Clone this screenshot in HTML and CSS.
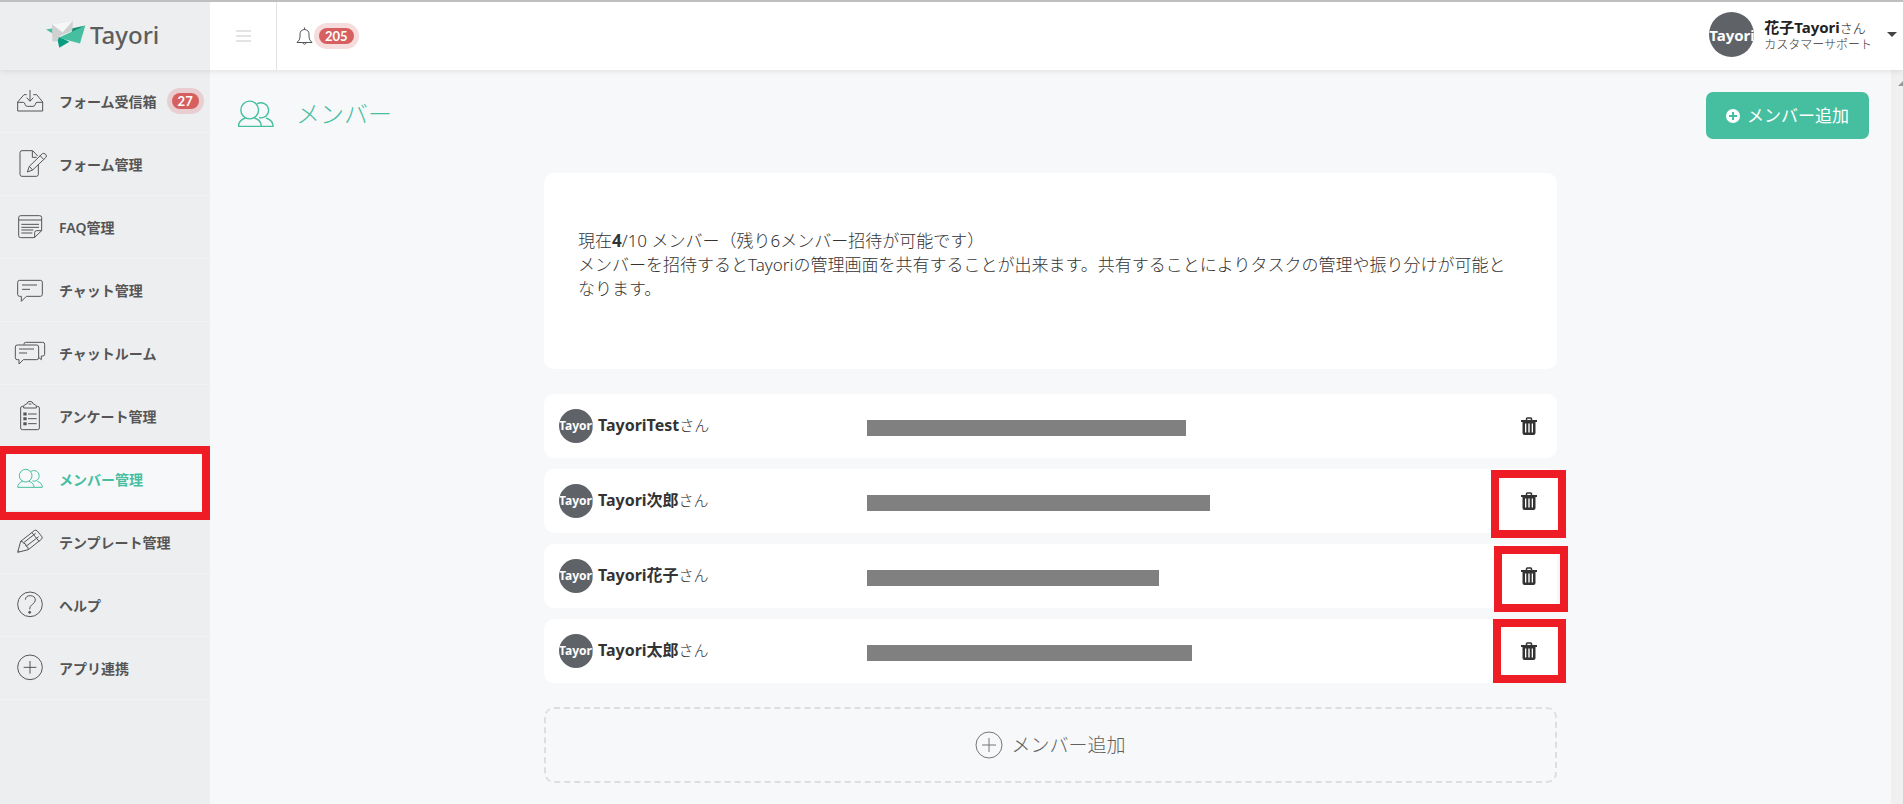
FILE: index.html
```html
<!DOCTYPE html>
<html lang="ja">
<head>
<meta charset="utf-8">
<title>メンバー | Tayori</title>
<link rel="stylesheet" href="styles.css">
</head>
<body>
<svg class="defs" aria-hidden="true">
  <symbol id="i-members" viewBox="45 402 90 90">
    <circle cx="77" cy="437" r="19"/>
    <path d="M68 454Q53 459 53 472H102Q102 459 87 454M93 424A16 16 0 1 1 97 453M112 454Q127 459 127 472H102"/>
  </symbol>
  <symbol id="i-trash" viewBox="0 0 16 18">
    <path d="M5.500 3V1.800Q5.500 1 6.300 1H9.700Q10.500 1 10.500 1.800V3" fill="none" stroke="currentColor" stroke-width="1.500"/>
    <path d="M0 3H16V5H14.500V16Q14.500 18 12.500 18H3.500Q1.500 18 1.500 16V5H0ZM4 6.500V15.500H5.300V6.500ZM7.300 6.500V15.500H8.700V6.500ZM10.700 6.500V15.500H12V6.500Z" fill="currentColor" fill-rule="evenodd"/>
  </symbol>
</svg>
<header class="topbar">
  <a class="brand" href="#">
    <svg class="brand-mark" viewBox="138 64 120 86" aria-hidden="true">
      <path d="M138 92L160 88L178 106L158 104Z" fill="#45bf9f"/>
      <path d="M170 112L178 147L208 129L174 112Z" fill="#079c80"/>
      <path d="M156 76L218 66L218 95L178 112L172 128L157 127Z" fill="#cfd0d0"/>
      <path d="M156 76L218 66L188 101Z" fill="#f5f6f6"/>
      <path d="M218 88L256 80L214 104Z" fill="#148d73"/>
      <path d="M256 80L176 117L240 134Z" fill="#45bf9f"/>
    </svg>
    <span>Tayori</span>
  </a>
  <button class="menu-toggle" type="button" aria-label="メニュー"><i></i><i></i><i></i></button>
  <button class="notice" type="button" aria-label="お知らせ">
    <svg class="bell" viewBox="0 0 17 18" aria-hidden="true"><path d="M1 15.500H16Q13 13 13 10V7Q13 3 8.500 2.500Q4 3 4 7V10Q4 13 1 15.500ZM8.500 2.500V.5M6.500 15.500Q8.500 19 10.500 15.500"/></svg>
    <span class="badge">205</span>
  </button>
  <button class="account" type="button">
    <span class="avatar avatar-large"><span>Tayori</span></span>
    <span class="account-text">
      <span class="account-name"><b>花子Tayori</b>さん</span>
      <span class="account-role">カスタマーサポート</span>
    </span>
    <span class="caret"></span>
  </button>
</header>
<div class="shell">
  <nav class="sidebar">
    <a class="nav-item" href="#"><svg viewBox="45 258 90 90"><path d="M80 284H72L53 306V333H128V306L110 284H100M53 307H70Q74 307 75 313Q76 319 82 319H99Q105 319 106 313Q107 307 111 307H128M90 270V303M80 293L90 304L100 293"/></svg><span>フォーム受信箱</span><span class="badge">27</span></a>
    <a class="nav-item" href="#"><svg viewBox="45 57 90 90"><path d="M115 103V133Q115 139 109 139H66Q60 139 60 133V68Q60 62 66 62H98L113 78M97 63V82H110M82 126L88 109L127 71Q131 68 137 73Q142 78 137 83L98 120ZM88 109L98 120M120 77L131 88"/></svg><span>フォーム管理</span></a>
    <a class="nav-item" href="#"><svg viewBox="45 246 90 90"><path d="M125 302V263Q125 257 119 257H62Q56 257 56 263V317Q56 323 62 323H103L125 302H110Q104 302 104 308V323M56 270H125M64 283H117M64 292H117M64 300H100M64 309H97"/></svg><span>FAQ管理</span></a>
    <a class="nav-item" href="#"><svg viewBox="45 435 90 90"><path d="M59 451H121Q127 451 127 457V493Q127 499 121 499H79L64 514V499H59Q53 499 53 493V457Q53 451 59 451M66 465H111M66 478H90"/></svg><span>チャット管理</span></a>
    <a class="nav-item" href="#"><svg viewBox="45 24 90 90"><path d="M52 45H110Q116 45 116 51V83Q116 89 110 89H70L57 102V89H52Q46 89 46 83V51Q46 45 52 45M72 44V42Q72 37 77 37H128Q134 37 134 43V73Q134 78 128 78H124V89L116 82M57 57H102M57 69H81"/></svg><span>チャットルーム</span></a>
    <a class="nav-item" href="#"><svg viewBox="45 213 90 90"><path d="M70 229H67Q62 229 62 234V294Q62 299 67 299H113Q118 299 118 294V234Q118 229 113 229H110M71 234V228Q73 223 80 222Q82 214 90 214Q98 214 100 222Q107 223 109 228V234ZM86 222H94M84 252H110M84 266H110M84 281H110"/><path d="M70 252H80M70 266H80M70 281H80" stroke-width="9"/></svg><span>アンケート管理</span></a>
    <a class="nav-item is-active" href="#" aria-current="page"><svg><use href="#i-members"/></svg><span>メンバー管理</span><span class="mark mark-nav"></span></a>
    <a class="nav-item" href="#"><svg viewBox="45 21 90 90"><path d="M53 97L62 64L104 31Q108 29 112 33L125 49Q129 54 124 58L85 89ZM62 64Q69 63 71 70Q78 69 78 78Q85 79 85 89M71 68L107 40M78 79L116 50M96 38L117 64M54 92L58 96"/></svg><span>テンプレート管理</span></a>
    <a class="nav-item" href="#"><svg viewBox="45 210 90 90"><circle cx="90" cy="253" r="37"/><path d="M76 239Q77 227 91 227Q106 228 106 240Q106 247 97 253Q89 258 89 268"/><circle cx="89" cy="277" r="3" fill="currentColor"/></svg><span>ヘルプ</span></a>
    <a class="nav-item" href="#"><svg viewBox="45 399 90 90"><circle cx="90" cy="442" r="37"/><path d="M71 442H109M90 423V461"/></svg><span>アプリ連携</span></a>
  </nav>
  <main class="content">
    <div class="page-head">
      <h1><svg viewBox="52 416 77 59"><use href="#i-members" x="45" y="402" width="90" height="90"/></svg>メンバー</h1>
      <button class="add-button" type="button"><svg viewBox="0 0 14 14" aria-hidden="true"><circle cx="7" cy="7" r="7" fill="#fff"/><path d="M3 7H11M7 3V11" stroke="#45bf9f" stroke-width="2"/></svg>メンバー追加</button>
    </div>
    <div class="column">
      <section class="info">
        <p>現在<b>4</b>/10 メンバー（残り6メンバー招待が可能です）</p>
        <p>メンバーを招待するとTayoriの管理画面を共有することが出来ます。共有することによりタスクの管理や振り分けが可能となります。</p>
      </section>
      <ul class="members">
        <li class="member"><span class="avatar"><span>Tayori</span></span><span class="member-name"><b>TayoriTest</b>さん</span><span class="mail"><i style="width:319px"></i></span><button class="trash" type="button" aria-label="削除"><svg><use href="#i-trash"/></svg></button></li>
        <li class="member"><span class="avatar"><span>Tayori</span></span><span class="member-name"><b>Tayori次郎</b>さん</span><span class="mail"><i style="width:343px"></i></span><button class="trash" type="button" aria-label="削除"><svg><use href="#i-trash"/></svg></button><span class="mark mark-second"></span></li>
        <li class="member"><span class="avatar"><span>Tayori</span></span><span class="member-name"><b>Tayori花子</b>さん</span><span class="mail"><i style="width:292px"></i></span><button class="trash" type="button" aria-label="削除"><svg><use href="#i-trash"/></svg></button><span class="mark mark-third"></span></li>
        <li class="member"><span class="avatar"><span>Tayori</span></span><span class="member-name"><b>Tayori太郎</b>さん</span><span class="mail"><i style="width:325px"></i></span><button class="trash" type="button" aria-label="削除"><svg><use href="#i-trash"/></svg></button><span class="mark mark-fourth"></span></li>
      </ul>
      <button class="add-row" type="button"><svg viewBox="0 0 28 28" aria-hidden="true"><circle cx="14" cy="14" r="13"/><path d="M7 14H21M14 7V21"/></svg>メンバー追加</button>
    </div>
  </main>
  <div class="scroll-track"><span></span></div>
</div>
</body>
</html>
```
FILE: styles.css
```css
* { box-sizing: border-box; }

body {
  margin: 0;
  height: 100vh;
  display: flex;
  flex-direction: column;
  overflow: hidden;
  border-top: 2px solid #bfbfbf;
  background: #f7f8fa;
  color: #333;
  font-family: "Noto Sans", "Noto Sans CJK JP", sans-serif;
  font-size: 17px;
  font-weight: 300;
  line-height: 24px;
}

button {
  border: 0;
  padding: 0;
  background: none;
  color: inherit;
  font: inherit;
  cursor: pointer;
}

a { color: inherit; text-decoration: none; }
b { font-weight: 700; }
svg { flex: none; }
.defs { position: absolute; width: 0; height: 0; }

.topbar {
  position: relative;
  z-index: 1;
  flex: none;
  display: flex;
  height: 68px;
  background: #fff;
  box-shadow: 0 1px 6px rgba(0, 0, 0, .1);
}

.brand {
  width: 210px;
  display: flex;
  align-items: center;
  gap: 4px;
  padding: 0 0 3px 46px;
  background: #edeef0;
  color: #5c5d5e;
  font-size: 24px;
  font-weight: 500;
}
.brand-mark { width: 40px; height: 29px; }

.menu-toggle {
  width: 67px;
  display: flex;
  flex-direction: column;
  justify-content: center;
  align-items: center;
  gap: 3px;
  border-right: 1px solid #e2e3e5;
}
.menu-toggle i { width: 15px; height: 2px; background: #e2e3e4; }

.notice { display: flex; align-items: center; gap: 7px; padding-left: 19px; }
.bell { width: 17px; height: 18px; fill: none; stroke: #555; }
.notice .badge { margin-left: -1px; }

.badge {
  padding: 0 6px;
  border-radius: 8px;
  background: #d65f5f;
  box-shadow: 0 0 0 5px rgba(214, 95, 95, .22);
  color: #fff;
  font-family: Lato, sans-serif;
  font-size: 13px;
  font-weight: 700;
  line-height: 16px;
}

.account {
  margin-left: auto;
  display: flex;
  align-items: center;
  padding: 0 6px 3px 0;
  text-align: left;
}
.account-text { display: flex; flex-direction: column; margin-left: 10px; padding-top: 2px; }
.account-name { color: #222; font-size: 13px; line-height: 18px; }
.account-name b { font-size: 15px; }
.account-role { font-size: 12px; line-height: 16px; }
.caret {
  margin-left: 15px;
  border: 5px solid transparent;
  border-top-color: #444;
  border-bottom: 0;
}

.avatar {
  flex: none;
  display: flex;
  align-items: center;
  justify-content: flex-start;
  width: 34px;
  height: 34px;
  overflow: hidden;
  border-radius: 50%;
  background: #5f6368;
  color: #fff;
  font-size: 12px;
  font-weight: 700;
}
.avatar-large { width: 45px; height: 45px; font-size: 15px; }

.shell { flex: 1; min-height: 0; display: flex; }

.sidebar { flex: none; width: 210px; background: #edeef0; }
.nav-item {
  position: relative;
  display: flex;
  align-items: center;
  height: 63px;
  padding-left: 15px;
  border-bottom: 1px solid #f1f2f4;
  color: #555;
  font-size: 14px;
  font-weight: 600;
}
.nav-item > span:not(.mark, .badge) { padding-top: 2px; }
.nav-item svg {
  width: 30px;
  height: 30px;
  margin-right: 14px;
  overflow: visible;
  fill: none;
  stroke: currentColor;
  stroke-width: 3;
}
.nav-item .badge { margin-left: 15px; }
.nav-item.is-active { background: #f7f8fa; color: #45bf9f; }

.mark { position: absolute; border: 8px solid #ee1c24; pointer-events: none; }
.mark-nav { z-index: 2; left: 0; right: 0; top: -2px; height: 74px; border-left-width: 6px; }
.mark-second { right: -9px; top: 1px; width: 75px; height: 68px; }
.mark-third { right: -11px; top: 2px; width: 74px; height: 66px; }
.mark-fourth { right: -9px; top: 0; width: 73px; height: 64px; }

.content { flex: 1; min-width: 0; padding: 22px 22px 20px; }
.page-head { display: flex; justify-content: space-between; align-items: center; padding-left: 6px; }
h1 {
  margin: 0;
  display: flex;
  align-items: center;
  gap: 22px;
  padding-bottom: 4px;
  color: #45bf9f;
  font-size: 24px;
  font-weight: 300;
  line-height: 36px;
}
h1 svg { width: 36px; height: 28px; fill: none; stroke: currentColor; stroke-width: 3; }

.add-button {
  display: flex;
  align-items: center;
  gap: 7px;
  height: 47px;
  padding: 0 20px;
  border-radius: 7px;
  background: #45bf9f;
  color: #fff;
  font-weight: 400;
}
.add-button svg { width: 14px; height: 14px; }

.column { max-width: 1013px; margin: 34px auto 0; }
.info { padding: 56px 40px 68px 34px; border-radius: 10px; background: #fff; }
.info p { margin: 0; }

.members {
  display: flex;
  flex-direction: column;
  gap: 11px;
  margin: 25px 0 24px;
  padding: 0;
  list-style: none;
}
.member {
  position: relative;
  display: flex;
  align-items: center;
  height: 64px;
  padding: 0 20px 0 15px;
  border-radius: 10px;
  background: #fff;
}
.member-name { width: 269px; margin-left: 5px; padding-bottom: 3px; font-size: 15px; }
.member-name b { font-size: 16px; }
.mail { flex: 1; padding-top: 3px; }
.mail i { display: block; height: 16px; background: #808080; }
.trash { display: flex; }
.trash svg { width: 16px; height: 18px; }

.add-row {
  display: flex;
  align-items: center;
  justify-content: center;
  gap: 8px;
  width: 100%;
  height: 76px;
  border: 2px dashed #dcdee0;
  border-radius: 10px;
  color: #606060;
  font-size: 19px;
}
.add-row svg { width: 28px; height: 28px; fill: none; stroke: #777; }

.scroll-track { flex: none; width: 12px; padding: 10px 0 0 7px; overflow: hidden; background: #f0f0f0; }
.scroll-track span {
  display: block;
  width: 0;
  border: 6px solid transparent;
  border-top: 0;
  border-bottom-color: #999;
}
```
